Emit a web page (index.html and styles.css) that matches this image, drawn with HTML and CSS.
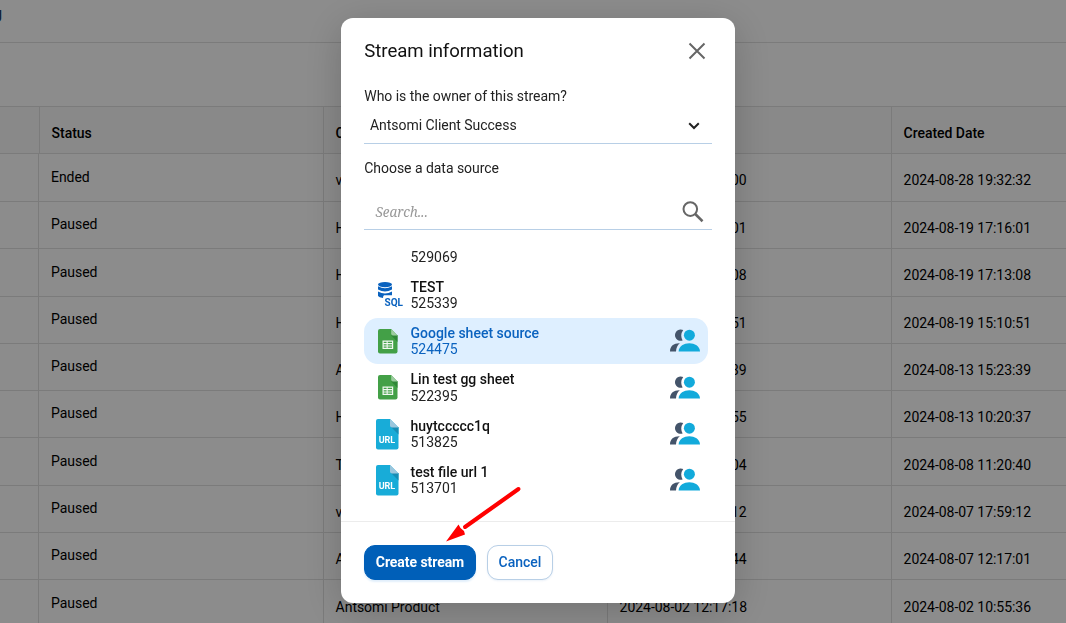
FILE: index.html
```
<!DOCTYPE html>
<html lang="en">
<head>
<meta charset="utf-8">
<title>Stream information</title>
<link rel="stylesheet" href="styles.css">
</head>
<body>
<svg class="defs" width="0" height="0">
  <symbol id="users" viewBox="0 0 30 23">
    <path fill="#44546a" d="M13.200 1A5.700 5.700 0 1 0 12.600 11.500Q9.600 6 13.200 1ZM0 22.500C0 17 4 14.100 9.800 14.300Q6.300 17 6 22.500Z"/>
    <circle cx="19.400" cy="6.200" r="5.500" fill="#12aadb"/>
    <path fill="#12aadb" d="M8.600 22.500C9 11.500 29.600 11.500 30 22.500Z"/>
  </symbol>
  <symbol id="sheet" viewBox="0 0 20 25">
    <path fill="#43a047" d="M2 0H13.200L19.500 6.500V22.500Q19.500 24.500 17.500 24.500H2Q0 24.500 0 22.500V2Q0 0 2 0Z"/>
    <path fill="#2f8737" d="M13 6.300H19.500V13Z"/>
    <path fill="#9ccc9f" d="M13.200 0L19.500 6.500H15Q13.200 6.500 13.200 4.500Z"/>
    <path fill="#f1f8f1" fill-rule="evenodd" d="M4.500 11.500H15.200V20H4.500ZM5.700 12.800V14H8.600V12.800ZM9.700 12.800V14H14V12.800ZM5.700 15.200V16.400H8.600V15.200ZM9.700 15.200V16.400H14V15.200ZM5.700 17.600V18.800H8.600V17.600ZM9.700 17.600V18.800H14V17.600Z"/>
  </symbol>
</svg>

<div class="page">
  <div class="topbar"><span class="crumb">g</span></div>
  <div class="toolbar"></div>
  <div class="row head"><div></div><div>Status</div><div>C</div><div></div><div>Created Date</div></div>
  <div class="row first"><div></div><div class="status">Ended</div><div>v</div><div><span class="time">00</span></div><div>2024-08-28 19:32:32</div></div>
  <div class="row"><div></div><div class="status">Paused</div><div>H</div><div><span class="time">01</span></div><div>2024-08-19 17:16:01</div></div>
  <div class="row"><div></div><div class="status">Paused</div><div>H</div><div><span class="time">08</span></div><div>2024-08-19 17:13:08</div></div>
  <div class="row"><div></div><div class="status">Paused</div><div>H</div><div><span class="time">51</span></div><div>2024-08-19 15:10:51</div></div>
  <div class="row"><div></div><div class="status">Paused</div><div>A</div><div><span class="time">39</span></div><div>2024-08-13 15:23:39</div></div>
  <div class="row"><div></div><div class="status">Paused</div><div>H</div><div><span class="time">55</span></div><div>2024-08-13 10:20:37</div></div>
  <div class="row"><div></div><div class="status">Paused</div><div>T</div><div><span class="time">04</span></div><div>2024-08-08 11:20:40</div></div>
  <div class="row"><div></div><div class="status">Paused</div><div>v</div><div><span class="time">12</span></div><div>2024-08-07 17:59:12</div></div>
  <div class="row"><div></div><div class="status">Paused</div><div>A</div><div><span class="time">44</span></div><div>2024-08-07 12:17:01</div></div>
  <div class="row"><div></div><div class="status">Paused</div><div>Antsomi Product</div><div>2024-08-02 12:17:18</div><div>2024-08-02 10:55:36</div></div>
</div>

<div class="overlay">
  <div class="modal">
    <div class="modal-head">
      <h1 class="title">Stream information</h1>
      <svg class="close" width="18" height="18" viewBox="0 0 18 18"><path d="M1.500 1.500L16.500 16.500M16.500 1.500L1.500 16.500" stroke="#666" stroke-width="2"/></svg>
    </div>
    <div class="label">Who is the owner of this stream?</div>
    <div class="select">
      <span>Antsomi Client Success</span>
      <svg width="12" height="8" viewBox="0 0 12 8"><path d="M1.200 1.300L6 6L10.800 1.300" fill="none" stroke="#222" stroke-width="2"/></svg>
    </div>
    <div class="label second">Choose a data source</div>
    <div class="search">
      <span>Search...</span>
      <svg width="22" height="22" viewBox="0 0 22 22" fill="none" stroke="#666"><circle cx="8.300" cy="8.100" r="6.800" stroke-width="2"/><path d="M13.200 13L20.500 20.200" stroke-width="2.600"/></svg>
    </div>
    <div class="list">
      <div class="item cut"><div class="icon"></div><div class="info"><span>529069</span></div></div>
      <div class="item">
        <div class="icon"><svg class="sql" width="28" height="28" viewBox="0 0 28 28" fill="#0a62bf"><ellipse cx="7" cy="2.600" rx="7" ry="2.600"/><path d="M0 4.200Q7 8.200 14 4.200V7.600Q7 11.600 0 7.600ZM0 9.600Q7 13.600 14 9.600V13.200H6Q5 14 5 16Q1 15.300 0 14Z"/><text x="6.500" y="24.300" class="sql-text" textLength="18.500">SQL</text></svg></div>
        <div class="info"><b>TEST</b><span>525339</span></div>
      </div>
      <div class="item selected"><div class="icon"><svg class="sheet" width="20" height="25"><use href="#sheet"/></svg></div><div class="info"><b>Google sheet source</b><span>524475</span></div><svg class="users" width="30" height="23"><use href="#users"/></svg></div>
      <div class="item"><div class="icon"><svg class="sheet" width="20" height="25"><use href="#sheet"/></svg></div><div class="info"><b>Lin test gg sheet</b><span>522395</span></div><svg class="users" width="30" height="23"><use href="#users"/></svg></div>
      <div class="item">
        <div class="icon"><svg class="url" width="23" height="31" viewBox="0 0 23 31"><path fill="#18acd8" d="M2 0H14L22.500 8.500V28.500Q22.500 30.500 20.500 30.500H2Q0 30.500 0 28.500V2Q0 0 2 0Z"/><path fill="#168db5" d="M15 8H22.500V15.500Z"/><path fill="#9bc6dd" d="M14 0L22.500 8.500H16Q14 8.500 14 6.500Z"/><text x="2.700" y="23.700" class="url-text" textLength="16.500">URL</text></svg></div>
        <div class="info"><b>huytccccc1q</b><span>513825</span></div><svg class="users" width="30" height="23"><use href="#users"/></svg>
      </div>
      <div class="item">
        <div class="icon"><svg class="url" width="23" height="31" viewBox="0 0 23 31"><path fill="#18acd8" d="M2 0H14L22.500 8.500V28.500Q22.500 30.500 20.500 30.500H2Q0 30.500 0 28.500V2Q0 0 2 0Z"/><path fill="#168db5" d="M15 8H22.500V15.500Z"/><path fill="#9bc6dd" d="M14 0L22.500 8.500H16Q14 8.500 14 6.500Z"/><text x="2.700" y="23.700" class="url-text" textLength="16.500">URL</text></svg></div>
        <div class="info"><b>test file url 1</b><span>513701</span></div><svg class="users" width="30" height="23"><use href="#users"/></svg>
      </div>
    </div>
    <div class="modal-foot">
      <button class="btn primary">Create stream</button>
      <button class="btn">Cancel</button>
    </div>
  </div>
</div>

<svg class="arrow" width="78" height="58" viewBox="0 0 78 58"><path d="M72.500 4L19 42" stroke="#f00" stroke-width="4" stroke-linecap="round"/><path d="M0 56.500L12.500 39.500L14.500 43L18 46L19 49.500Z" fill="#f00"/></svg>
</body>
</html>
```
FILE: styles.css
```
* { box-sizing: border-box; }
body { margin: 0; height: 623px; overflow: hidden; background: #fff; color: #000; font: 14px/16px Roboto, sans-serif; letter-spacing: -.04px; }
.defs { display: none; }

.page { width: 1066px; }
.topbar { height: 43px; border-bottom: 1px solid #e0e0e0; padding-top: 4px; overflow: hidden; }
.crumb { display: block; margin-left: -7px; font-size: 16px; line-height: 20px; font-weight: 500; color: #233a5a; }
.toolbar { height: 64px; border-bottom: 1px solid #e0e0e0; }
.row { display: grid; grid-template-columns: 39px 285px 284px 284px 1fr; height: 47.300px; border-bottom: 1px solid #e0e0e0; }
.row > div { border-right: 1px solid #e0e0e0; padding: 18.200px 0 0 11.600px; white-space: nowrap; overflow: hidden; }
.row > div:last-child { border-right: 0; }
.row > .status { padding: 14.300px 0 0 12px; }
.row.first { height: 48px; }
.row.first > .status { padding-top: 15px; }
.head { grid-template-columns: 40px 284px 284px 284px 1fr; height: 47px; background: #fafafa; font-weight: 500; }
.head > div { padding-top: 18px; }
.time { display: block; width: 127px; text-align: right; }

.overlay { position: fixed; inset: 0; background: rgba(0, 0, 0, .45); padding: 18px 0 0 341px; }
.modal { width: 394px; height: 585px; background: #fff; border-radius: 12px; box-shadow: 0 8px 40px rgba(0, 0, 0, .2); color: #222; display: flex; flex-direction: column; }
.modal-head { height: 70px; padding: 20.500px 28.600px 0 23.300px; display: flex; justify-content: space-between; }
.title { margin: 0; font-size: 18.600px; line-height: 24px; font-weight: 400; color: #111; letter-spacing: -.04px; }
.close { margin-top: 3px; }
.label { margin-left: 23.300px; height: 16px; }
.select { margin: 0 23px; height: 40px; border-bottom: 1px solid #b8cfe6; display: flex; justify-content: space-between; padding: 13px 12px 0 6px; }
.select svg { margin-top: 5px; }
.label.second { margin-top: 16px; }
.search { margin: 0 23px; height: 54px; border-bottom: 1px solid #b8cfe6; display: flex; justify-content: space-between; padding: 25px 8px 0 11.500px; }
.search span { font: italic 13.500px/22px "Noto Serif", "Liberation Serif", serif; color: #999; }
.list { height: 291px; margin: 0 27px 0 23px; overflow: hidden; }
.item { display: flex; height: 46.300px; padding: 7px 8px 0 0; border-radius: 14px; letter-spacing: 0; }
.item.cut { height: 41.500px; padding-top: 19px; }
.item.selected { height: 46.600px; }
.icon { width: 46.500px; padding-left: 12px; flex: none; }
.icon svg { display: block; }
.icon .sheet { margin: 4px 0 0 2px; }
.icon .sql { margin: 3px 0 0 1.500px; }
.icon .url { margin-top: 1px; }
.info { display: flex; flex-direction: column; flex: 1; line-height: 16.500px; }
.info b { font-weight: 500; color: #111; }
.selected { background: #deefff; }
.selected .info, .selected .info b { color: #0a62bf; }
.users { margin-top: 4.500px; }
.url-text { font: bold 9px Roboto, sans-serif; fill: #fff; }
.sql-text { font: bold 10px Roboto, sans-serif; }
.modal-foot { border-top: 1px solid #ececec; flex: 1; padding: 23px 23px 0; display: flex; gap: 11px; }
.btn { height: 35px; width: 66px; padding: 0 0 1px; border: 1px solid #b8cfe6; border-radius: 11px; background: #fff; color: #0a62bf; font: 500 14px/16px Roboto, sans-serif; box-shadow: 0 1px 2px rgba(0, 90, 180, .08); }
.btn.primary { width: 112px; background: #005fb8; border-color: #005fb8; color: #fff; font-weight: 700; letter-spacing: -.06px; box-shadow: 0 2px 2px #e2effb; }
.arrow { position: absolute; left: 446px; top: 485px; }
```
